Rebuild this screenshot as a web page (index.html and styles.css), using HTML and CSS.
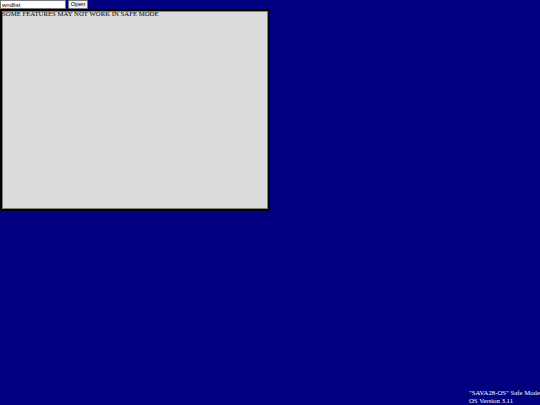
FILE: index.html
```html
<!DOCTYPE html>
<html>
<head>
<meta charset="utf-8">
<link rel="stylesheet" href="styles.css">
</head>
<body>
<div class="bar">
  <input class="cmd" type="text" value="wndlist">
  <button class="open">Open</button>
</div>
<div class="window">
  <div class="msg">SOME FEATURES MAY NOT WORK IN SAFE MODE</div>
</div>
<div class="info">
  <div>"SAVA28-OS" Safe Mode</div>
  <div>OS Version 3.11</div>
</div>
</body>
</html>
```
FILE: styles.css
```css
html, body {
  margin: 0;
  padding: 0;
  height: 100%;
}
body {
  background: #000080;
  font-family: "Liberation Serif", serif;
  overflow: hidden;
  position: relative;
}
.bar {
  display: flex;
  align-items: flex-start;
  gap: 2px;
  height: 9px;
}
.cmd {
  box-sizing: border-box;
  width: 66px;
  height: 9px;
  margin: 0;
  padding: 0 1px;
  border: 1px solid #7a7a7a;
  background: #fff;
  font-family: "Liberation Sans", sans-serif;
  font-size: 6px;
  color: #000;
  outline: none;
}
.open {
  box-sizing: border-box;
  width: 20px;
  height: 9px;
  margin: 0;
  padding: 0;
  border: 1px solid #767676;
  border-radius: 1px;
  background: #efefef;
  font-family: "Liberation Sans", sans-serif;
  font-size: 6px;
  line-height: 7px;
  color: #000;
}
.window {
  box-sizing: border-box;
  width: 270px;
  height: 202px;
  border: 2px solid #000;
  box-shadow: inset 0 0 0 1px #808080;
  background: #dcdcdc;
}
.msg {
  font-size: 6.75px;
  line-height: 8px;
  color: #000;
  margin-top: -1px;
}
.info {
  position: absolute;
  left: 469px;
  bottom: 1px;
  font-size: 6.75px;
  line-height: 7.5px;
  color: #fff;
  white-space: nowrap;
}
```
